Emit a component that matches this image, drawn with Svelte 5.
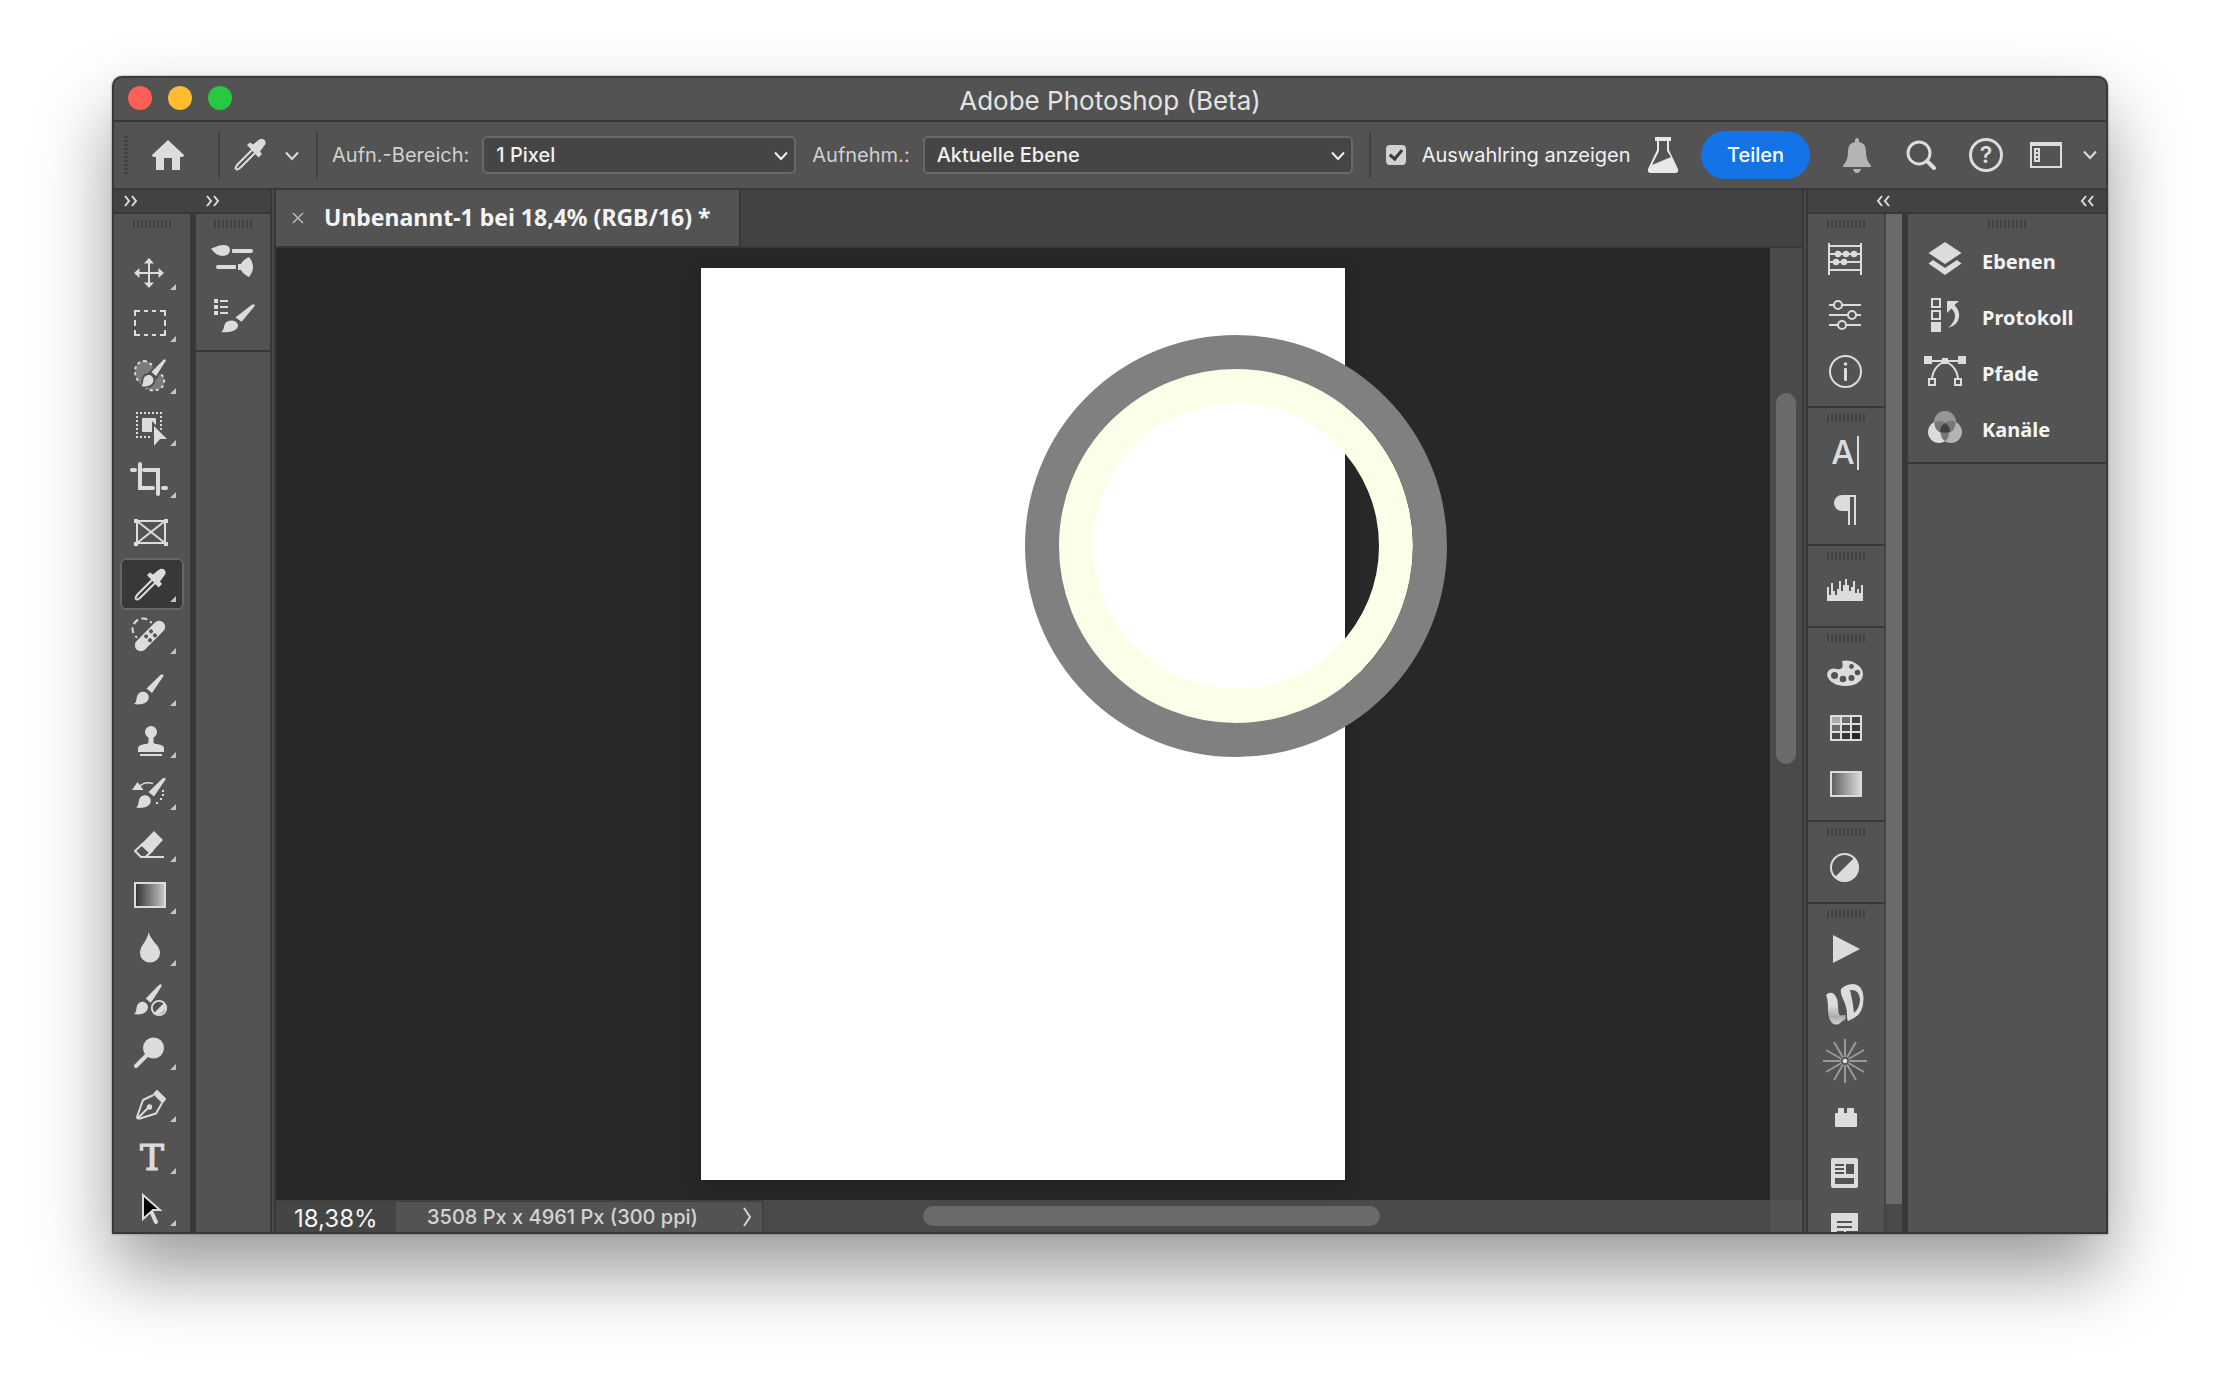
<script lang="ts">
    type Tool = { name: string; icon: string; flyout?: boolean };
    type Panel = { name: string; icon: string };

    const brush =
        '<path d="M12.5 14.5 26.5 1Q29.5 -1 29.5 2L18 19Z"/><path d="M0 30C4 28 1 21 6 18.5C10 16.5 15 19 14.8 23.5C14.5 29 7 31.5 0 30Z"/>';

    const halfCircle =
        '<circle r="13.5" fill="none" stroke="currentColor" stroke-width="2"/><path d="M-10 10 10-10A14 14 0 0 1-10 10Z"/>';

    const dropper =
        '<path d="M19.5 9.5 4 25Q0.5 29 2 30Q3.5 31.5 7 28L22.5 12.5" fill="none" stroke="currentColor" stroke-width="2"/><path d="M13 6 16 3.5 19 5.5 24.5 1Q28 -1.5 30.5 1Q33 4 30 7L26 12.5 28 15 24.5 18.5Z"/>';

    const tools: Tool[] = [
        {
            name: "Verschieben",
            flyout: true,
            icon: '<path d="M29 16V38M18 27H40" stroke="currentColor" stroke-width="2"/><path d="M29 12 34 17.5H24ZM29 42 34 36.5H24ZM14 27 19.5 22V32ZM44 27 38.5 22V32Z"/>',
        },
        {
            name: "Auswahlrechteck",
            flyout: true,
            icon: '<path d="M15 18V13H20M24 13H28M32 13H36M40 13H45V18M45 22V28M45 32V37H40M36 37H32M28 37H24M20 37H15V32M15 28V22" fill="none" stroke="currentColor" stroke-width="2"/>',
        },
        {
            name: "Auswahlpinsel",
            flyout: true,
            icon: `<path d="M24 11C31 11 34 18 34 22C42 23 45 27 44 33C43 40 32 43 26 38C23 34 19 33 17 29C12 20 17 11 24 11Z" fill="#7b7b7b" stroke="currentColor" stroke-width="2" stroke-dasharray="3 3"/><g stroke="#535353" stroke-width="5" transform="translate(21 9) scale(.84 .9)">${brush}</g><g transform="translate(21 9) scale(.84 .9)">${brush}</g>`,
        },
        {
            name: "Objektauswahl",
            flyout: true,
            icon: '<path d="M16 11H43M16 35H32M17 14V35M41 14V28" stroke="currentColor" stroke-width="2" stroke-dasharray="2 2"/><rect x="22" y="16" width="14" height="14" rx="1"/><path d="M34 24 47 37H40L34 44Z" stroke="#535353" stroke-width="4"/><path d="M34 24 47 37H40L34 44Z"/>',
        },
        {
            name: "Freistellen",
            flyout: true,
            icon: '<path d="M20 10V34H33M12 16H15M24 16H38V40M43 34H46" fill="none" stroke="currentColor" stroke-width="4" stroke-linecap="round"/>',
        },
        {
            name: "Rahmen",
            icon: '<path d="M17 15H45V37H17ZM17 15 45 37M45 15 17 37" fill="none" stroke="currentColor" stroke-width="2"/><path d="M14 13h4v4h-4zM44 13h4v4h-4zM14 36h4v4h-4zM44 36h4v4h-4z"/>',
        },
        {
            name: "Pipette",
            flyout: true,
            icon: `<g transform="translate(14 11)">${dropper}</g>`,
        },
        {
            name: "Reparaturpinsel",
            flyout: true,
            icon: '<circle cx="23" cy="19" r="10.5" fill="none" stroke="currentColor" stroke-width="2" stroke-dasharray="6 3.5"/><g transform="translate(30 26) rotate(-45)"><rect x="-20" y="-8" width="40" height="16" rx="8" fill="#535353"/><rect x="-19" y="-6" width="38" height="12" rx="6"/><g fill="#535353"><circle cx="-3" cy="-2.5" r="2"/><circle cx="4" cy="-2.5" r="2"/><circle cx="-3" cy="3" r="2"/><circle cx="4" cy="3" r="2"/></g></g>',
        },
        {
            name: "Pinsel",
            flyout: true,
            icon: `<g transform="translate(14 12)">${brush}</g>`,
        },
        {
            name: "Kopierstempel",
            flyout: true,
            icon: '<circle cx="31" cy="18" r="6"/><path d="M28.5 22H33.5V28Q33.5 30 37 30Q44 31 44 34V38H18V34Q18 31 25 30Q28.5 30 28.5 28ZM20 40H42V42H20Z"/>',
        },
        {
            name: "Protokollpinsel",
            flyout: true,
            icon: `<path d="M12 24 17.5 16 23.5 24Z"/><path d="M20 20Q25 15 33 17.5" fill="none" stroke="currentColor" stroke-width="1.5"/><g transform="translate(16 11.5)">${brush}</g><path d="M42 24h2v2h-2zM42 28h2v2h-2zM40 32h2v2h-2zM36 36h2v2h-2z"/>`,
        },
        {
            name: "Radiergummi",
            flyout: true,
            icon: '<path d="M34 13 43 22 30 36 20.5 27Z"/><path d="M23.5 25 15 33 21 39H25.5L33 32M20 39H44" fill="none" stroke="currentColor" stroke-width="2"/>',
        },
        {
            name: "Verlauf",
            flyout: true,
            icon: '<rect x="15" y="13" width="30" height="24" fill="url(#tool-gradient)" stroke="currentColor" stroke-width="2"/>',
        },
        {
            name: "Weichzeichner",
            flyout: true,
            icon: '<path d="M28.5 10Q30 15 35 21Q40 26 40 31A10 9.5 0 0 1 20 31Q20 26 24 21Q28 15 28.5 10Z"/>',
        },
        {
            name: "Korrekturpinsel",
            icon: `<g transform="translate(14 10) scale(.94 1)">${brush}</g><circle cx="39" cy="34" r="10" fill="#535353"/><g transform="translate(39 34) scale(.55)"><circle r="13" fill="none" stroke="currentColor" stroke-width="3.5"/><path d="M-9 9 9-9A13 13 0 0 1-9 9Z"/></g>`,
        },
        {
            name: "Abwedler",
            flyout: true,
            icon: '<circle cx="33.5" cy="22" r="10.5"/><path d="M28 28 16 40" stroke="currentColor" stroke-width="4" stroke-linecap="round"/>',
        },
        {
            name: "Zeichenstift",
            flyout: true,
            icon: '<path d="M33.5 17 23 22 17 39Q17 41 20 40.5L36 35.5 42 25M18 40 29 29" fill="none" stroke="currentColor" stroke-width="2" stroke-linejoin="round"/><circle cx="29.5" cy="29" r="2.7"/><path d="M33 16 36 12.5Q37 11.5 38 12.5L46 20.5Q46.5 21.5 42.5 25.5Z"/>',
        },
        {
            name: "Text",
            flyout: true,
            icon: '<text x="32" y="40" text-anchor="middle" font-family="DejaVu Serif, serif" font-size="36" stroke="currentColor" stroke-width="1.2">T</text>',
        },
        {
            name: "Pfadauswahl",
            flyout: true,
            icon: '<path d="M31 29 36 40" stroke="currentColor" stroke-width="4" stroke-linecap="round"/><path d="M23 13 40 28H33L23 37Z" fill="#000" stroke="currentColor" stroke-width="2"/>',
        },
    ];

    const brushPanels: Panel[] = [
        {
            name: "Pinseleinstellungen",
            icon: '<path d="M15 16.5Q20 15 23 13.5Q34 11.5 34 18.5Q33 24 26 24Q19 23 15 16.5ZM53 25Q57 30 57 35T53 45Q47 42 45 38H42V32H45Q47 28 53 25Z"/><path d="M37 19H55M22 35H39" stroke="currentColor" stroke-width="4" stroke-linecap="round"/><path d="M35 15V23M41 31V39" stroke="#535353" stroke-width="2"/>',
        },
        {
            name: "Pinsel",
            icon: `<path d="M18 11h4v4h-4zM18 17h4v4h-4zM18 23h4v4h-4zM24 12h8v2h-8zM24 18h8v2h-8zM24 24h8v2h-8z"/><g transform="translate(25 16) scale(1.15 .93)">${brush}</g>`,
        },
    ];

    const histogram = [23, 31, 19, 27, 31, 25, 17, 27, 21, 15, 21, 27, 23, 17, 29, 25, 29, 21];
    const histogramPath =
        "M19 37" + histogram.map((y, i) => `V${y}H${21 + i * 2}`).join("") + "V37Z";

    const swatches = ["#aaa", "#6c6c6c", "#444", "#6c6c6c", "#484848", "#3c3c3c", "#444", "#343434", "#262626"]
        .map((c, i) => `<rect x="${24 + (i % 3) * 10}" y="${15 + Math.floor(i / 3) * 8}" width="8" height="6" fill="${c}"/>`)
        .join("");

    const rays = Array.from(
        { length: 12 },
        (_, i) => `<rect x="4" y="-1" width="18" height="2" fill="#999" transform="rotate(${i * 30})"/>`
    ).join("");

    const panelGroups: Panel[][] = [
        [
            {
                name: "Abakus",
                icon: '<path d="M21 11V43M53 11V43M21 14H53M21 22H53M21 30H53M21 38H53" stroke="currentColor" stroke-width="2"/><circle cx="30" cy="22" r="3.2"/><circle cx="38" cy="22" r="3.2"/><circle cx="46" cy="22" r="3.2"/><circle cx="28" cy="30" r="3.2"/><circle cx="36" cy="30" r="3.2"/>',
            },
            {
                name: "Eigenschaften",
                icon: '<g fill="#535353" stroke="currentColor" stroke-width="2"><path d="M21 17H53M21 27H53M21 37H53"/><circle cx="30" cy="17" r="4"/><circle cx="44" cy="27" r="4"/><circle cx="34" cy="37" r="4"/></g>',
            },
            {
                name: "Info",
                icon: '<circle cx="37.5" cy="27.5" r="15.5" fill="none" stroke="currentColor" stroke-width="2"/><circle cx="37.5" cy="20" r="1.8"/><rect x="36" y="24" width="3" height="13" rx="1"/>',
            },
        ],
        [
            {
                name: "Zeichen",
                icon: '<text x="35" y="38" text-anchor="middle" font-family="Inter, sans-serif" font-size="33" font-weight="500">A</text><rect x="49" y="10" width="2" height="34"/>',
            },
            {
                name: "Absatz",
                icon: '<path d="M48 13V43H46V15H42V43H40V29H34A8 8 0 0 1 34 13Z"/>',
            },
        ],
        [{ name: "Histogramm", icon: `<path d="${histogramPath}"/>` }],
        [
            {
                name: "Farbe",
                icon: '<path d="M34 15Q42 13 48 17.5Q55 22 55 28Q55 34 48 38Q42 40.5 36 40Q28 39.5 23 35.5Q18 31 19.5 26.5Q21 22.5 26 22.5Q29 23.5 32 23Q36 22 34 15Z"/><g fill="#535353"><circle cx="26.5" cy="29.5" r="3.5"/><circle cx="35" cy="33" r="3.3"/><circle cx="43.5" cy="32" r="3"/><circle cx="49.5" cy="26.5" r="2.8"/><circle cx="43.5" cy="20.5" r="2.4"/></g>',
            },
            {
                name: "Farbfelder",
                icon: `<rect x="22" y="13" width="32" height="26" rx="1"/>${swatches}`,
            },
            {
                name: "Verläufe",
                icon: '<rect x="23" y="14" width="30" height="24" fill="url(#panel-gradient)" stroke="currentColor" stroke-width="2"/>',
            },
        ],
        [{ name: "Korrekturen", icon: `<g transform="translate(36.5 27.5)">${halfCircle}</g>` }],
        [
            { name: "Aktionen", icon: '<path d="M25 13 52 27 25 41Z"/>' },
            {
                name: "Retusche",
                icon: '<path d="M18 17Q22 13 26 16Q30 20 30 28Q30 38 33 37.5L37.5 37V41Q33 44 31 46Q25 48 22 42Q20 38 20 30Q20 21 18 17Z" fill="url(#script-gradient)"/><path fill-rule="evenodd" d="M33 11Q38 6 46 6Q56 8 55.5 21Q55 36 46 40L40 43Q39 42 39 37Q39 29 35 21Q32 15 33 11ZM42 12Q45 24 46 35Q52 30 52 21Q51 11 42 12Z"/>',
            },
            {
                name: "Strahlen",
                icon: `<g transform="translate(37 27)">${rays}<circle r="2.3"/></g>`,
            },
            {
                name: "Zusatzmodule",
                icon: '<path d="M27 24Q27 23 28 23H30V19Q30 18 31 18H35Q36 18 36 19V23H39V19Q39 18 40 18H45Q46 18 46 19V23H48Q49 23 49 24V36Q49 37 48 37H28Q27 37 27 36Z"/>',
            },
            {
                name: "Bibliotheken",
                icon: '<rect x="23" y="12" width="27" height="30" rx="2"/><path fill="#535353" d="M27 18h9v2h-9zM27 22h9v2h-9zM27 26h9v2h-9zM38 18h8v10h-8zM27 32h19v6h-19z"/>',
            },
            {
                name: "Notizen",
                icon: '<rect x="23" y="11" width="27" height="30" rx="1"/><path fill="#535353" d="M29 19h15v2h-15zM29 24h15v2h-15zM29 29h7v2h-7zM38 29h12v2h-10v8h-2z"/>',
            },
        ],
    ];

    const layerPanels: Panel[] = [
        {
            name: "Ebenen",
            icon: '<path d="M37 10 53.5 21 37 32 20.5 21ZM20.5 31.5 25 28 37 36 49 28 53.5 31.5 37 43Z"/>',
        },
        {
            name: "Protokoll",
            icon: '<path d="M24 11h8v8h-8zM24 23h8v8h-8z" fill="none" stroke="currentColor" stroke-width="2"/><path d="M23 34h10v10h-10zM39 13H51L46.5 17Q52 23 51 29Q50 37 40 40Q47 34 47 28Q47 24 43.5 20.5L39 25Z"/>',
        },
        {
            name: "Pfade",
            icon: '<path d="M20 17H54M35 18Q25 24 24 34M39 18Q49 24 50 34" fill="none" stroke="currentColor" stroke-width="2"/><path d="M16 12h8v8h-8zM50 12h8v8h-8zM34 14h6v6h-6z"/><path d="M21 35h6v6h-6zM47 35h6v6h-6z" fill="none" stroke="currentColor" stroke-width="2"/>',
        },
        {
            name: "Kanäle",
            icon: '<circle cx="31" cy="32" r="11"/><circle cx="43" cy="32" r="11" fill="#b4b4b4"/><circle cx="37" cy="22" r="11" fill="#969696"/><path d="M27 22Q33 19 37 23Q41 19 47 22Q48 30 41 33Q41 38 37 41Q33 38 33 33Q26 30 27 22Z" fill="#777"/><path d="M37 23Q42 26 42 31.5Q37 34 32 31.5Q32 26 37 23Z" fill="#404040"/>',
        },
    ];

    let activeTool = $state("Pipette");
    let sampleSize = $state("1 Pixel");
    let sampleLayer = $state("Aktuelle Ebene");
    let showRing = $state(true);
</script>

{#snippet chevron()}
    <svg class="chevron" width="16" height="10" viewBox="0 0 16 10" aria-hidden="true">
        <path d="M2 1.5 8 8 14 1.5" fill="none" stroke="currentColor" stroke-width="2" />
    </svg>
{/snippet}

{#snippet collapse(left: boolean)}
    <button class="collapse" aria-label="Bedienfelder umschalten">
        <svg width="14" height="12" viewBox="0 0 14 12">
            <path
                d={left ? "M6 1 2 6 6 11M13 1 9 6 13 11" : "M1 1 5 6 1 11M8 1 12 6 8 11"}
                fill="none"
                stroke="currentColor"
                stroke-width="2"
            />
        </svg>
    </button>
{/snippet}

<!-- shared gradients for the icons -->
<svg class="defs" width="0" height="0" aria-hidden="true">
    <linearGradient id="tool-gradient">
        <stop offset="0" stop-color="#303030" />
        <stop offset="1" stop-color="#c8c8c8" />
    </linearGradient>
    <linearGradient id="panel-gradient">
        <stop offset="0" stop-color="#5c5c5c" />
        <stop offset="1" stop-color="#dcdcdc" />
    </linearGradient>
    <linearGradient id="script-gradient" x1="0" y1="0" x2="0" y2="1">
        <stop offset="0.4" stop-color="#dcdcdc" />
        <stop offset="0.75" stop-color="#acacac" />
        <stop offset="1" stop-color="#d0d0d0" />
    </linearGradient>
</svg>

<div class="desktop">
    <main class="window">
        <header class="title-bar">
            <div class="lights">
                <button class="light red" aria-label="Schließen"></button>
                <button class="light yellow" aria-label="Minimieren"></button>
                <button class="light green" aria-label="Vollbild"></button>
            </div>
            <h1>Adobe Photoshop (Beta)</h1>
        </header>

        <div class="options-bar">
            <span class="bar-grip"></span>
            <button class="home" aria-label="Start">
                <svg width="34" height="30" viewBox="0 0 34 30">
                    <path d="M17 0 33 15Q33 17 31 17H29V30H21V18H13V30H5V17H3Q1 17 1 15Z" />
                </svg>
            </button>
            <span class="divider"></span>
            <button class="current-tool" aria-label="Werkzeugvorgaben">
                <svg width="34" height="32" viewBox="0 0 34 32">{@html dropper}</svg>
                {@render chevron()}
            </button>
            <span class="divider"></span>
            <label class="field-label" for="sample-size">Aufn.-Bereich:</label>
            <div class="select-box size">
                <select id="sample-size" bind:value={sampleSize}>
                    <option>1 Pixel</option>
                </select>
                {@render chevron()}
            </div>
            <label class="field-label" for="sample-layer">Aufnehm.:</label>
            <div class="select-box layer">
                <select id="sample-layer" bind:value={sampleLayer}>
                    <option>Aktuelle Ebene</option>
                </select>
                {@render chevron()}
            </div>
            <span class="divider"></span>
            <label class="ring-toggle">
                <input type="checkbox" bind:checked={showRing} />
                Auswahlring anzeigen
            </label>

            <div class="bar-actions">
                <button class="flask" aria-label="Beta-Funktionen">
                    <svg width="32" height="38" viewBox="0 0 32 38">
                        <path d="M8 1H24V5H22V14L31 33Q32 37 28 37H4Q0 37 1 33L10 14V5H8ZM12 5V15L5 29 24 21 20 15V5Z" fill-rule="evenodd" />
                    </svg>
                </button>
                <button class="share">Teilen</button>
                <button class="bell" aria-label="Mitteilungen">
                    <svg width="30" height="36" viewBox="0 0 30 36">
                        <path d="M13 3Q13 1 15 1T17 3V5Q24 6 24 14Q24 22 27 26Q29 28 29 30H1Q1 28 3 26Q6 22 6 14Q6 6 13 5ZM11 32H19Q18 36 15 36T11 32Z" />
                    </svg>
                </button>
                <button aria-label="Suchen">
                    <svg width="30" height="30" viewBox="0 0 30 30" stroke="currentColor">
                        <circle cx="13" cy="13" r="11" fill="none" stroke-width="3" />
                        <path d="M21 21 28 28" stroke-width="4" stroke-linecap="round" />
                    </svg>
                </button>
                <button aria-label="Hilfe">
                    <svg width="36" height="36" viewBox="0 0 36 36">
                        <circle cx="18" cy="18" r="15.5" fill="none" stroke="currentColor" stroke-width="3" />
                        <text x="18" y="26" text-anchor="middle" font-family="Inter, sans-serif" font-size="23" font-weight="600">?</text>
                    </svg>
                </button>
                <button class="workspace" aria-label="Arbeitsbereich">
                    <svg width="32" height="28" viewBox="0 0 32 28">
                        <path d="M0 1H32V27H0ZM2 5V25H30V5ZM4 7H10V21H4ZM6 9V11H8V9ZM6 13V15H8V13ZM6 17V19H8V17Z" fill-rule="evenodd" />
                    </svg>
                    {@render chevron()}
                </button>
            </div>
        </div>

        <div class="workspace-area">
            <aside class="dock left">
                <div class="dock-header">
                    {@render collapse(false)}
                    {@render collapse(false)}
                </div>
                <div class="dock-columns">
                    <div class="column tools">
                        <span class="grip"></span>
                        {#each tools as tool}
                            <button
                                class="tool"
                                class:active={tool.name === activeTool}
                                aria-label={tool.name}
                                onclick={() => (activeTool = tool.name)}
                            >
                                <svg width="64" height="52" viewBox="0 0 64 52">
                                    {@html tool.icon}
                                    {#if tool.flyout}
                                        <path class="flyout" d="M56 38V44H50Z" />
                                    {/if}
                                </svg>
                            </button>
                        {/each}
                    </div>
                    <div class="column brushes">
                        <section class="group">
                            <span class="grip"></span>
                            {#each brushPanels as panel}
                                <button class="panel-icon" aria-label={panel.name}>
                                    <svg width="74" height="56" viewBox="0 0 74 56">{@html panel.icon}</svg>
                                </button>
                            {/each}
                        </section>
                    </div>
                </div>
            </aside>

            <section class="document">
                <div class="tabs">
                    <div class="tab">
                        <button class="close" aria-label="Dokument schließen">
                            <svg width="12" height="12" viewBox="0 0 12 12">
                                <path d="M1 1 11 11M11 1 1 11" stroke="currentColor" stroke-width="1.5" />
                            </svg>
                        </button>
                        <span>Unbenannt-1 bei 18,4% (RGB/16) *</span>
                    </div>
                </div>
                <div class="view">
                    <div class="canvas">
                        <div class="page">
                            {#if showRing}
                                <div class="sample-ring"></div>
                            {/if}
                        </div>
                    </div>
                    <div class="v-scroll"><span class="thumb"></span></div>
                </div>
                <footer class="status">
                    <span class="zoom">18,38%</span>
                    <button class="doc-info">
                        3508 Px x 4961 Px (300 ppi)
                        <svg width="10" height="20" viewBox="0 0 10 20" aria-hidden="true">
                            <path d="M2 1 8 10 2 19" fill="none" stroke="currentColor" stroke-width="2" />
                        </svg>
                    </button>
                    <div class="h-scroll"><span class="thumb"></span></div>
                    <span class="corner"></span>
                </footer>
            </section>

            <aside class="dock right">
                <div class="dock-header">
                    {@render collapse(true)}
                    {@render collapse(true)}
                </div>
                <div class="dock-columns">
                    <div class="column icons">
                        {#each panelGroups as group}
                            <section class="group">
                                <span class="grip"></span>
                                {#each group as panel}
                                    <button class="panel-icon" aria-label={panel.name}>
                                        <svg width="76" height="56" viewBox="0 0 76 56">{@html panel.icon}</svg>
                                    </button>
                                {/each}
                            </section>
                        {/each}
                    </div>
                    <div class="dock-scroll"><span></span></div>
                    <div class="column layers">
                        <section class="group">
                            <span class="grip"></span>
                            {#each layerPanels as panel}
                                <button class="panel-row">
                                    <svg width="74" height="56" viewBox="0 0 74 56" aria-hidden="true">{@html panel.icon}</svg>
                                    <span>{panel.name}</span>
                                </button>
                            {/each}
                        </section>
                    </div>
                </div>
            </aside>
        </div>
    </main>
</div>

<style>
    :global(body) {
        margin: 0;
        background: #fff;
    }

    .defs {
        position: absolute;
    }

    .desktop {
        box-sizing: border-box;
        height: 100vh;
        padding: 76px 112px 148px;
        font-family: Inter, "Liberation Sans", sans-serif;
        color: #dcdcdc;
    }

    .window {
        box-sizing: border-box;
        height: 100%;
        display: flex;
        flex-direction: column;
        overflow: hidden;
        border: 2px solid #383838;
        border-radius: 10px 10px 0 0;
        background: #535353;
        box-shadow:
            0 0 2px rgba(0, 0, 0, 0.5),
            0 38px 76px rgba(0, 0, 0, 0.4);
    }

    button {
        display: flex;
        align-items: center;
        padding: 0;
        border: 0;
        background: none;
        color: inherit;
        font: inherit;
    }

    svg {
        display: block;
        flex-shrink: 0;
        fill: currentColor;
    }

    /* --- Title bar --- */
    .title-bar {
        display: flex;
        align-items: center;
        height: 40px;
        flex-shrink: 0;
        padding-bottom: 2px;
        border-bottom: 2px solid #383838;
    }

    .lights {
        flex: 1;
        display: flex;
        gap: 16px;
        padding-left: 14px;
    }

    .light {
        width: 24px;
        height: 24px;
        border-radius: 50%;
    }

    .red {
        background: #ff5f57;
    }

    .yellow {
        background: #febc2e;
    }

    .green {
        background: #28c840;
    }

    h1 {
        margin: 0;
        padding-top: 6px;
        font-size: 26px;
        font-weight: 400;
        line-height: 32px;
        color: #e4e4e4;
    }

    .title-bar::after {
        content: "";
        flex: 1;
        padding-left: 14px;
    }

    /* --- Options bar --- */
    .options-bar {
        display: flex;
        align-items: center;
        height: 66px;
        flex-shrink: 0;
        padding: 0 8px 0 10px;
        border-bottom: 2px solid #383838;
        font-size: 20px;
        white-space: nowrap;
    }

    .bar-grip {
        width: 4px;
        height: 38px;
        background: repeating-linear-gradient(#424242 0 2px, transparent 2px 4px);
    }

    .home {
        margin: 0 33px 0 23px;
    }

    .divider {
        width: 2px;
        height: 46px;
        flex-shrink: 0;
        background: #424242;
    }

    .current-tool {
        gap: 16px;
        margin: 0 16px 0 14px;
    }

    .field-label {
        margin: 0 13px 0 14px;
        color: #d0d0d0;
    }

    .select-box {
        display: flex;
        align-items: center;
        box-sizing: border-box;
        height: 38px;
        border: 2px solid #686868;
        border-radius: 5px;
        background: #454545;
        color: #f0f0f0;
        font-weight: 500;
    }

    .select-box.size {
        flex: 0 1 314px;
        margin-right: 2px;
    }

    .select-box.layer {
        flex: 0 1 430px;
        margin-right: 16px;
    }

    select {
        flex: 1;
        min-width: 0;
        height: 100%;
        padding: 0 36px 0 12px;
        margin-right: -22px;
        border: 0;
        outline: 0;
        appearance: none;
        background: none;
        color: inherit;
        font: inherit;
    }

    .chevron {
        padding-top: 2px;
    }

    .select-box .chevron {
        margin-right: 5px;
        pointer-events: none;
    }

    .ring-toggle {
        display: flex;
        align-items: center;
        gap: 16px;
        margin-left: 15px;
        color: #f0f0f0;
    }

    .ring-toggle input {
        display: grid;
        place-items: center;
        width: 20px;
        height: 20px;
        margin: 0;
        appearance: none;
        border-radius: 4px;
        background: #d2d2d2;
    }

    .ring-toggle input:checked::before {
        content: "";
        width: 5px;
        height: 10px;
        margin-bottom: 3px;
        border: solid #383838;
        border-width: 0 3px 3px 0;
        transform: rotate(40deg);
    }

    .bar-actions {
        display: flex;
        align-items: center;
        gap: 32px;
        margin-left: auto;
    }

    .flask {
        margin-right: -10px;
        color: #e8e8e8;
    }

    .share {
        height: 48px;
        padding: 0 26px;
        border-radius: 24px;
        background: #1473e6;
        color: #fff;
        font-weight: 500;
    }

    .bell {
        margin-right: 2px;
        color: #b4b4b4;
    }

    .workspace {
        gap: 20px;
        margin-left: -6px;
    }

    .workspace .chevron {
        padding-top: 0;
    }

    /* --- Docks --- */
    .workspace-area {
        display: flex;
        flex: 1;
        min-height: 0;
    }

    .dock {
        display: flex;
        flex-direction: column;
        flex-shrink: 0;
        background: #383838;
    }

    .dock.left {
        width: 158px;
        border-right: 2px solid #4a4a4a;
    }

    .dock.right {
        box-sizing: border-box;
        width: 302px;
        padding-left: 2px;
        border-left: 2px solid #4a4a4a;
    }

    .dock-header {
        display: flex;
        align-items: center;
        height: 22px;
        flex-shrink: 0;
        margin-bottom: 2px;
        background: #424242;
    }

    .left .dock-header {
        gap: 68px;
        padding-left: 10px;
        margin-right: 2px;
    }

    .right .dock-header {
        gap: 190px;
        justify-content: flex-end;
        padding-right: 12px;
    }

    .dock-columns {
        display: flex;
        flex: 1;
        min-height: 0;
    }

    .column {
        display: flex;
        flex-direction: column;
        overflow: hidden;
        background: #535353;
    }

    .tools {
        width: 76px;
        align-items: center;
        margin-right: 2px;
        box-shadow: 2px 0 #383838;
    }

    .tools .grip {
        margin-bottom: 18px;
    }

    .brushes {
        width: 74px;
        margin-left: 2px;
        border-left: 2px solid #383838;
    }

    .icons {
        width: 76px;
    }

    .layers {
        flex: 1;
        margin-left: 6px;
    }

    .grip {
        width: 38px;
        height: 8px;
        flex-shrink: 0;
        margin: 6px auto 4px;
        background: repeating-linear-gradient(90deg, #424242 0 2px, transparent 2px 4px);
    }

    .group {
        padding-bottom: 6px;
        border-bottom: 2px solid #383838;
    }

    .group .grip {
        display: block;
    }

    .tool {
        box-sizing: border-box;
        width: 64px;
        height: 52px;
        flex-shrink: 0;
        justify-content: center;
        border-radius: 6px;
    }

    .tool.active {
        background: #383838;
        box-shadow: inset 0 0 0 2px #666;
    }

    .flyout {
        fill: #c4c4c4;
    }

    .panel-icon {
        height: 56px;
    }

    .panel-row {
        width: 100%;
        height: 56px;
        color: #dcdcdc;
        font-family: "Noto Sans", sans-serif;
        font-size: 20px;
        font-weight: 700;
    }

    .panel-row span {
        padding-top: 2px;
        color: #f4f4f4;
    }

    .dock-scroll {
        width: 16px;
        padding-bottom: 28px;
        border-left: 2px solid #454545;
        background: #4a4a4a;
    }

    .dock-scroll span {
        display: block;
        height: 100%;
        background: #6a6a6a;
    }

    /* --- Document --- */
    .document {
        display: flex;
        flex: 1;
        flex-direction: column;
        min-width: 0;
        border: solid #383838;
        border-width: 0 2px;
    }

    .tabs {
        display: flex;
        height: 56px;
        flex-shrink: 0;
        border-bottom: 2px solid #383838;
        background: #424242;
    }

    .tab {
        display: flex;
        align-items: center;
        gap: 20px;
        padding: 0 28px 0 16px;
        border-right: 2px solid #383838;
        background: #535353;
        color: #f4f4f4;
        font-family: "Noto Sans", sans-serif;
        font-size: 23px;
        font-weight: 700;
        line-height: 30px;
        white-space: nowrap;
    }

    .tab span {
        padding-bottom: 2px;
    }

    .close {
        color: #b8b8b8;
    }

    .view {
        display: flex;
        flex: 1;
        min-height: 0;
    }

    .canvas {
        display: flex;
        flex: 1;
        justify-content: center;
        box-sizing: border-box;
        min-width: 0;
        padding: 20px 0;
        background: #282828;
    }

    .page {
        position: relative;
        aspect-ratio: 3508 / 4961;
        background: #fff;
        box-shadow: 0 6px 20px rgba(0, 0, 0, 0.2);
    }

    .sample-ring {
        position: absolute;
        top: 67px;
        left: 324px;
        box-sizing: border-box;
        width: 422px;
        height: 422px;
        border: 34px solid #808080;
        border-radius: 50%;
        box-shadow: inset 0 0 0 34px #fbffe8;
    }

    .v-scroll {
        box-sizing: border-box;
        width: 32px;
        padding: 145px 6px 0;
        background: #4a4a4a;
    }

    .thumb {
        display: block;
        border-radius: 10px;
        background: #6a6a6a;
    }

    .v-scroll .thumb {
        height: 46%;
    }

    .status {
        display: flex;
        height: 32px;
        flex-shrink: 0;
        background: #4a4a4a;
    }

    .zoom {
        box-sizing: border-box;
        width: 120px;
        padding: 4px 0 0 18px;
        border-top: 2px solid #424242;
        background: #454545;
        color: #f4f4f4;
        font-size: 24px;
        line-height: 26px;
    }

    .doc-info {
        box-sizing: border-box;
        flex: 0 0 368px;
        justify-content: space-between;
        padding: 0 10px 0 31px;
        border-top: 2px solid #424242;
        border-right: 2px solid #424242;
        background: #535353;
        color: #d4d4d4;
        font-size: 20px;
        font-weight: 500;
        line-height: 24px;
        white-space: nowrap;
    }

    .h-scroll {
        flex: 1;
        padding: 6px 0 6px 159px;
    }

    .h-scroll .thumb {
        width: 54%;
        height: 20px;
    }

    .corner {
        width: 32px;
        background: #535353;
    }
</style>
